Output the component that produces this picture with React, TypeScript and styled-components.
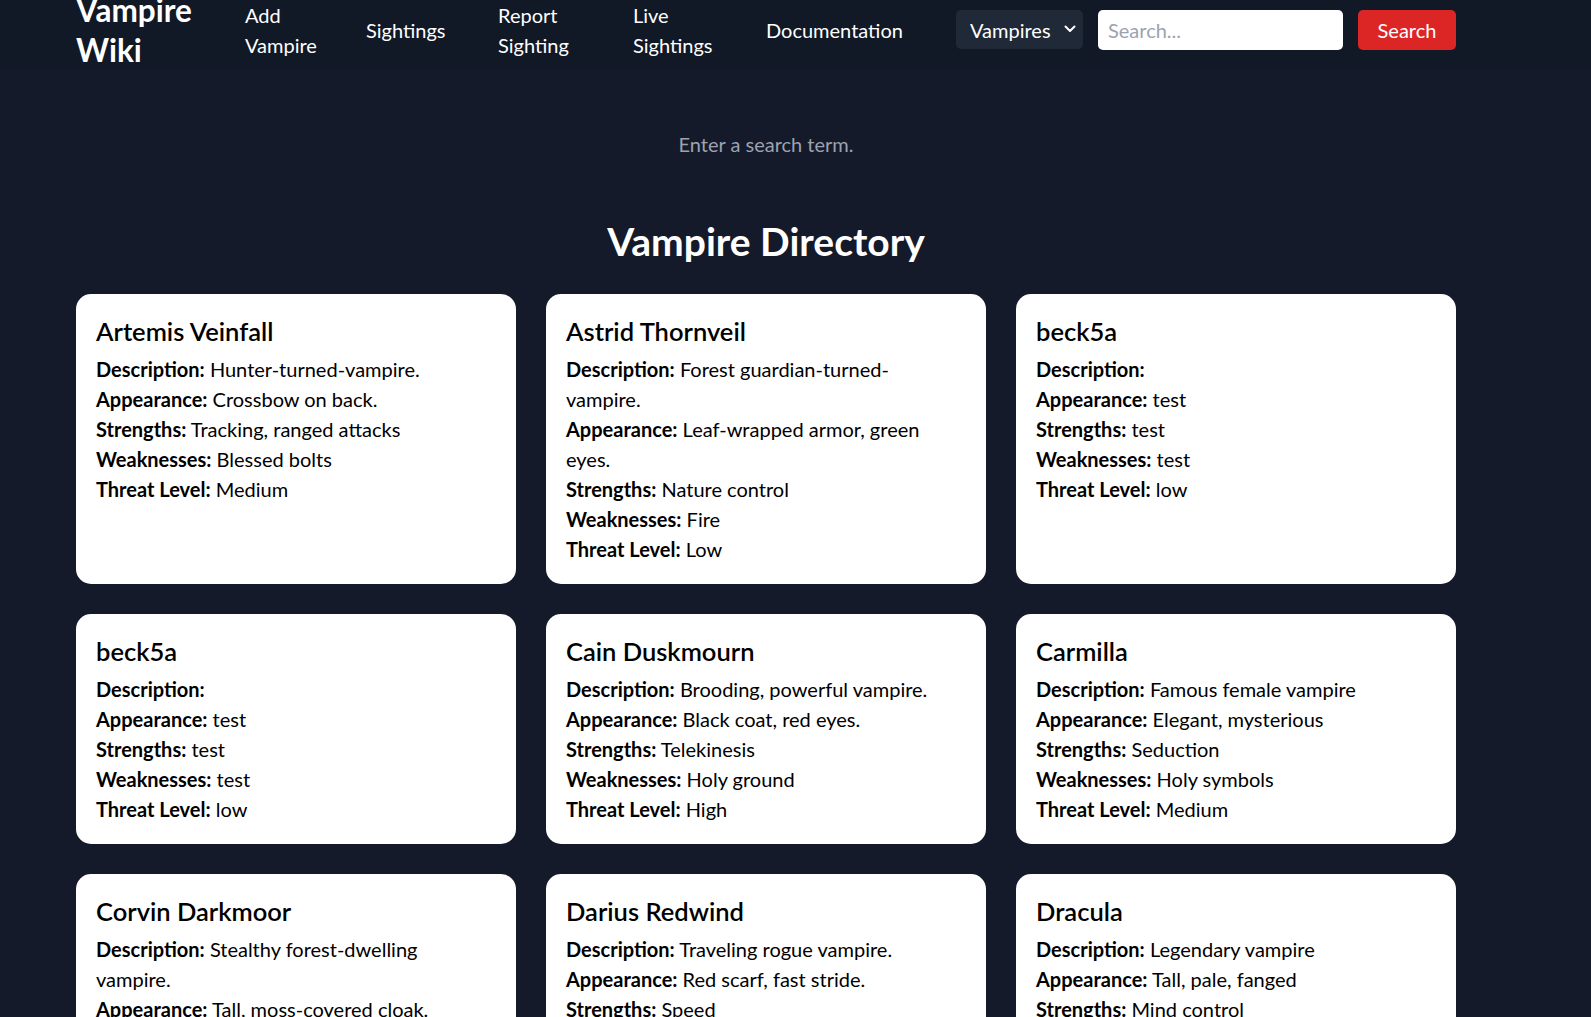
import React from 'react';
import styled, { createGlobalStyle } from 'styled-components';

interface Vampire {
  name: string;
  description: string;
  appearance: string;
  strengths: string;
  weaknesses: string;
  threat: string;
}

const vampires: Vampire[] = [
  { name: 'Artemis Veinfall', description: 'Hunter-turned-vampire.', appearance: 'Crossbow on back.', strengths: 'Tracking, ranged attacks', weaknesses: 'Blessed bolts', threat: 'Medium' },
  { name: 'Astrid Thornveil', description: 'Forest guardian-turned-vampire.', appearance: 'Leaf-wrapped armor, green eyes.', strengths: 'Nature control', weaknesses: 'Fire', threat: 'Low' },
  { name: 'beck5a', description: '', appearance: 'test', strengths: 'test', weaknesses: 'test', threat: 'low' },
  { name: 'beck5a', description: '', appearance: 'test', strengths: 'test', weaknesses: 'test', threat: 'low' },
  { name: 'Cain Duskmourn', description: 'Brooding, powerful vampire.', appearance: 'Black coat, red eyes.', strengths: 'Telekinesis', weaknesses: 'Holy ground', threat: 'High' },
  { name: 'Carmilla', description: 'Famous female vampire', appearance: 'Elegant, mysterious', strengths: 'Seduction', weaknesses: 'Holy symbols', threat: 'Medium' },
  { name: 'Corvin Darkmoor', description: 'Stealthy forest-dwelling vampire.', appearance: 'Tall, moss-covered cloak.', strengths: 'Stealth, camouflage', weaknesses: 'Sunlight', threat: 'Medium' },
  { name: 'Darius Redwind', description: 'Traveling rogue vampire.', appearance: 'Red scarf, fast stride.', strengths: 'Speed', weaknesses: 'Running water', threat: 'Medium' },
  { name: 'Dracula', description: 'Legendary vampire', appearance: 'Tall, pale, fanged', strengths: 'Mind control', weaknesses: 'Garlic, sunlight', threat: 'High' },
];

const GlobalStyle = createGlobalStyle`
  html, body {
    margin: 0;
    padding: 0;
    background: #141a29;
    font-family: Lato, "Open Sans", sans-serif;
  }
  * { box-sizing: border-box; }
`;

const Header = styled.header`
  background: #111826;
  height: 69px;
  padding-bottom: 10px;
`;

const HeaderInner = styled.div`
  width: 1532px;
  height: 100%;
  padding: 0 76px;
  display: flex;
  align-items: center;
`;

const Logo = styled.div`
  width: 122px;
  margin-right: 48px;
  color: #fff;
  font-size: 31.5px;
  line-height: 40px;
  font-weight: 700;
`;

const Nav = styled.nav`
  display: flex;
  align-items: center;
  gap: 48px;
`;

const NavLink = styled.a<{ $width: number }>`
  width: ${(p) => p.$width}px;
  color: #fff;
  font-size: 20px;
  line-height: 30px;
  text-decoration: none;
`;

const SearchForm = styled.form`
  display: flex;
  align-items: center;
  gap: 15px;
  margin-left: 51px;
`;

const SelectWrap = styled.div`
  position: relative;
  width: 127px;
  height: 39px;
`;

const Select = styled.select`
  appearance: none;
  width: 100%;
  height: 100%;
  background: #1f2937;
  color: #fff;
  border: none;
  border-radius: 5px;
  padding: 0 0 0 14px;
  font-family: inherit;
  font-size: 20px;
`;

const Chevron = styled.svg`
  position: absolute;
  right: 7px;
  top: 15px;
  pointer-events: none;
`;

const Input = styled.input`
  width: 245px;
  height: 40px;
  border: none;
  border-radius: 5px;
  background: #fff;
  padding: 0 10px;
  font-family: inherit;
  font-size: 20px;
  &::placeholder { color: #9ca3af; }
`;

const Button = styled.button`
  width: 98px;
  height: 40px;
  border: none;
  border-radius: 5px;
  background: #dc2626;
  color: #fff;
  font-family: inherit;
  font-size: 20px;
`;

const Main = styled.main`
  width: 1532px;
  padding: 60px 76px 40px;
`;

const Message = styled.p`
  margin: 0 0 60px;
  text-align: center;
  color: #9ca3af;
  font-size: 20px;
  line-height: 30px;
`;

const Heading = styled.h1`
  margin: 0 0 30px;
  text-align: center;
  color: #fff;
  font-size: 39px;
  line-height: 45px;
  font-weight: 700;
`;

const Grid = styled.div`
  display: grid;
  grid-template-columns: repeat(3, 440px);
  gap: 30px;
  align-items: stretch;
`;

const Card = styled.div`
  background: #fff;
  border-radius: 15px;
  padding: 20px 26px 20px 20px;
  color: #000;
`;

const CardTitle = styled.h2`
  margin: 0 0 5px;
  font-size: 25.5px;
  line-height: 35px;
  font-weight: 600;
`;

const Field = styled.p`
  margin: 0;
  font-size: 20px;
  line-height: 30px;
`;

const Label = styled.strong`
  font-weight: 700;
`;

const navItems = [
  { label: 'Add Vampire', width: 73 },
  { label: 'Sightings', width: 84 },
  { label: 'Report Sighting', width: 87 },
  { label: 'Live Sightings', width: 85 },
  { label: 'Documentation', width: 139 },
];

const VampireCard: React.FC<{ v: Vampire }> = ({ v }) => (
  <Card>
    <CardTitle>{v.name}</CardTitle>
    <Field><Label>Description:</Label> {v.description}</Field>
    <Field><Label>Appearance:</Label> {v.appearance}</Field>
    <Field><Label>Strengths:</Label> {v.strengths}</Field>
    <Field><Label>Weaknesses:</Label> {v.weaknesses}</Field>
    <Field><Label>Threat Level:</Label> {v.threat}</Field>
  </Card>
);

const App: React.FC = () => {
  return (
    <>
      <GlobalStyle />
      <Header>
        <HeaderInner>
          <Logo>Vampire Wiki</Logo>
          <Nav>
            {navItems.map((item) => (
              <NavLink key={item.label} href="#" $width={item.width}>
                {item.label}
              </NavLink>
            ))}
          </Nav>
          <SearchForm onSubmit={(e) => e.preventDefault()}>
            <SelectWrap>
              <Select defaultValue="vampires">
                <option value="vampires">Vampires</option>
                <option value="sightings">Sightings</option>
              </Select>
              <Chevron width="12" height="8" viewBox="0 0 12 8" fill="none">
                <path d="M1.5 1.5l4.5 4.5 4.5-4.5" stroke="#fff" strokeWidth="2" strokeLinecap="round" strokeLinejoin="round" />
              </Chevron>
            </SelectWrap>
            <Input placeholder="Search..." />
            <Button type="submit">Search</Button>
          </SearchForm>
        </HeaderInner>
      </Header>
      <Main>
        <Message>Enter a search term.</Message>
        <Heading>Vampire Directory</Heading>
        <Grid>
          {vampires.map((v, i) => (
            <VampireCard key={i} v={v} />
          ))}
        </Grid>
      </Main>
    </>
  );
};

export default App;
